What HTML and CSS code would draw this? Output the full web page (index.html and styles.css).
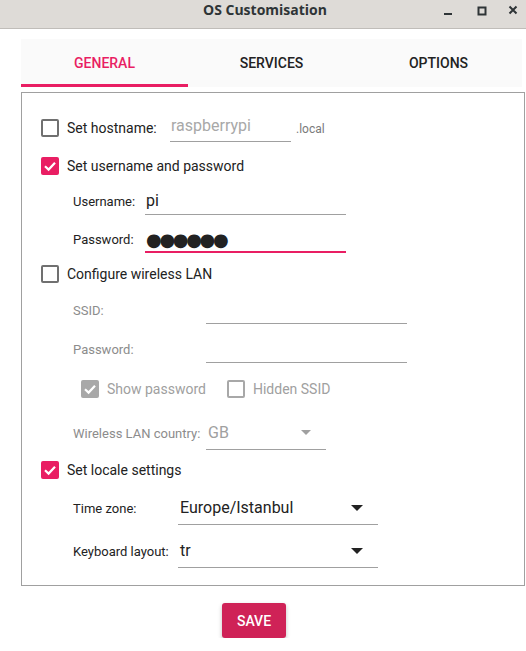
FILE: index.html
```html
<!DOCTYPE html>
<html>
<head>
<meta charset="utf-8">
<link rel="stylesheet" href="styles.css">
</head>
<body>
<div class="titlebar">
  <div class="title">OS Customisation</div>
  <div class="wincontrols">
    <svg class="wc" width="12" height="12" viewBox="0 0 12 12"><rect x="2" y="9" width="8" height="2" fill="#2e3436"/></svg>
    <svg class="wc" width="12" height="12" viewBox="0 0 12 12"><rect x="2.5" y="2.5" width="7" height="7" fill="none" stroke="#2e3436" stroke-width="2"/></svg>
    <svg class="wc" width="12" height="12" viewBox="0 0 12 12"><path d="M2.5 2.5 L9.5 9.5 M9.5 2.5 L2.5 9.5" stroke="#2e3436" stroke-width="2"/></svg>
  </div>
</div>
<div class="content">
  <div class="tabs">
    <div class="tab active">GENERAL</div>
    <div class="tab">SERVICES</div>
    <div class="tab">OPTIONS</div>
  </div>
  <div class="panel">
    <div class="row">
      <span class="cb"></span>
      <span class="cbtext lbl-host">Set hostname:</span>
      <div class="field w120 placeholder">raspberrypi</div>
      <span class="suffix">.local</span>
    </div>
    <div class="row">
      <span class="cb on"><svg viewBox="0 0 18 18" width="18" height="18"><path d="M4 9.2 L7.6 12.6 L14 5.8" fill="none" stroke="#fff" stroke-width="2.2"/></svg></span>
      <span class="cbtext">Set username and password</span>
    </div>
    <div class="row sub">
      <span class="sublbl w72">Username:</span>
      <div class="field w200">pi</div>
    </div>
    <div class="row sub">
      <span class="sublbl w72">Password:</span>
      <div class="field w200 focus"><span class="dots">●●●●●●</span></div>
    </div>
    <div class="row">
      <span class="cb"></span>
      <span class="cbtext">Configure wireless LAN</span>
    </div>
    <div class="row sub">
      <span class="sublbl w133 dis">SSID:</span>
      <div class="field w200"></div>
    </div>
    <div class="row sub">
      <span class="sublbl w133 dis">Password:</span>
      <div class="field w200"></div>
    </div>
    <div class="row subcb">
      <span class="cb dison"><svg viewBox="0 0 18 18" width="18" height="18"><path d="M4 9.2 L7.6 12.6 L14 5.8" fill="none" stroke="#fff" stroke-width="2.2"/></svg></span>
      <span class="cbtext dis">Show password</span>
      <span class="cb dis2"></span>
      <span class="cbtext dis">Hidden SSID</span>
    </div>
    <div class="row sub">
      <span class="sublbl w133 dis">Wireless LAN country:</span>
      <div class="combo w120 discombo"><span>GB</span><span class="arrow small"></span></div>
    </div>
    <div class="row">
      <span class="cb on"><svg viewBox="0 0 18 18" width="18" height="18"><path d="M4 9.2 L7.6 12.6 L14 5.8" fill="none" stroke="#fff" stroke-width="2.2"/></svg></span>
      <span class="cbtext">Set locale settings</span>
    </div>
    <div class="row sub">
      <span class="sublbl w105">Time zone:</span>
      <div class="combo w200"><span>Europe/Istanbul</span><span class="arrow"></span></div>
    </div>
    <div class="row sub">
      <span class="sublbl w105">Keyboard layout:</span>
      <div class="combo w200"><span>tr</span><span class="arrow"></span></div>
    </div>
  </div>
  <div class="actions">
    <button class="save">SAVE</button>
  </div>
</div>
</body>
</html>
```
FILE: styles.css
```css
html, body {
  margin: 0;
  padding: 0;
  background: #ffffff;
  font-family: Roboto, "Liberation Sans", sans-serif;
  color: #222;
}
.titlebar {
  height: 28px;
  background: #dedbd7;
  border-bottom: 1px solid #c0bdb9;
  display: flex;
  align-items: center;
  position: relative;
}
.title {
  flex: 1;
  text-align: center;
  font-family: "Open Sans", "DejaVu Sans", sans-serif;
  font-weight: 700;
  font-size: 14px;
  color: #2e3436;
  padding-left: 4px;
  margin-top: -9px;
}
.wincontrols {
  position: absolute;
  right: 0;
  top: 0;
  height: 28px;
  display: flex;
  align-items: center;
}
.wc:nth-child(1) { margin-right: 22px; margin-top: -8px; }
.wc:nth-child(2) { margin-right: 19px; margin-top: -7px; }
.wc:nth-child(3) { margin-right: 7px; margin-top: -8px; }
.content {
  padding: 10px 1px 0 21px;
}
.tabs {
  width: 501px;
  height: 48px;
  background: #fafafa;
  display: flex;
}
.tab {
  flex: 1;
  display: flex;
  align-items: center;
  justify-content: center;
  font-weight: 500;
  font-size: 14px;
  color: #222;
  padding-top: 2px;
  box-sizing: border-box;
  border-bottom: 3px solid transparent;
}
.tab.active {
  color: #e91e63;
  border-bottom-color: #e91e63;
}
.panel {
  margin-top: 5px;
  width: 502px;
  height: 475px;
  border: 1px solid #a0a0a0;
  display: grid;
  grid-template-rows: 36px 39px 32px 44px 25px 48px 30px 49px 40px 33px 44px 42px;
  align-content: start;
  padding-top: 17px;
  box-sizing: content-box;
}
.row {
  display: flex;
  align-items: center;
  padding-left: 19px;
}
.row.sub { padding-left: 51px; }
.row.subcb { padding-left: 59px; }
.cb {
  width: 18px;
  height: 18px;
  box-sizing: border-box;
  border: 2px solid #707070;
  border-radius: 2px;
  flex: none;
  display: flex;
}
.cb.on {
  background: #e91e63;
  border: none;
}
.cb.dison {
  background: #a8a8a8;
  border: none;
}
.cb.dis2 {
  border-color: #a8a8a8;
  margin-left: 21px;
}
.cbtext {
  margin-left: 8px;
  font-size: 14px;
  color: #222;
}
.cbtext.dis { color: #a0a0a0; margin-left: 8px; }
.lbl-host { width: 103px; flex: none; }
.suffix {
  font-size: 12px;
  color: #7a7a7a;
  margin-left: 5px;
  margin-top: 2px;
}
.field {
  height: 26px;
  border-bottom: 1px solid #a0a0a0;
  font-size: 16px;
  display: flex;
  align-items: center;
  padding-left: 1px;
  box-sizing: content-box;
  flex: none;
}
.field.placeholder { color: #a8a8a8; height: 27px; padding-left: 1px; padding-bottom: 2px; margin-top: -2px; }
.field.focus { border-bottom: 2px solid #e91e63; height: 25px; }
.w120 { width: 120px; }
.w200 { width: 200px; }
.sublbl {
  font-size: 13px;
  color: #222;
  flex: none;
}
.sublbl.dis { color: #8c8c8c; }
.w72 { width: 72px; }
.w105 { width: 105px; }
.w133 { width: 133px; }
.dots {
  font-family: "DejaVu Sans", sans-serif;
  font-size: 18px;
  letter-spacing: -2.3px;
  color: #222;
  margin-top: 2px;
}
.combo {
  height: 33px;
  border-bottom: 1px solid #a0a0a0;
  display: flex;
  align-items: center;
  justify-content: space-between;
  font-size: 16px;
  padding-left: 2px;
  padding-right: 15px;
  box-sizing: border-box;
  flex: none;
}
.discombo { color: #a0a0a0; padding-right: 15px; }
.arrow {
  width: 0;
  height: 0;
  border-left: 6px solid transparent;
  border-right: 6px solid transparent;
  border-top: 6px solid #222;
}
.arrow.small {
  border-left-width: 5px;
  border-right-width: 5px;
  border-top: 5px solid #a0a0a0;
}
.actions {
  display: flex;
  justify-content: center;
  padding-top: 17px;
  padding-right: 38px;
}
.save {
  width: 64px;
  height: 35px;
  border: none;
  border-radius: 3px;
  background: #cf2257;
  color: #fff;
  font-family: Roboto, sans-serif;
  font-weight: 500;
  font-size: 14px;
  box-shadow: 0 2px 4px rgba(0,0,0,0.25);
  padding: 0;
}
```
